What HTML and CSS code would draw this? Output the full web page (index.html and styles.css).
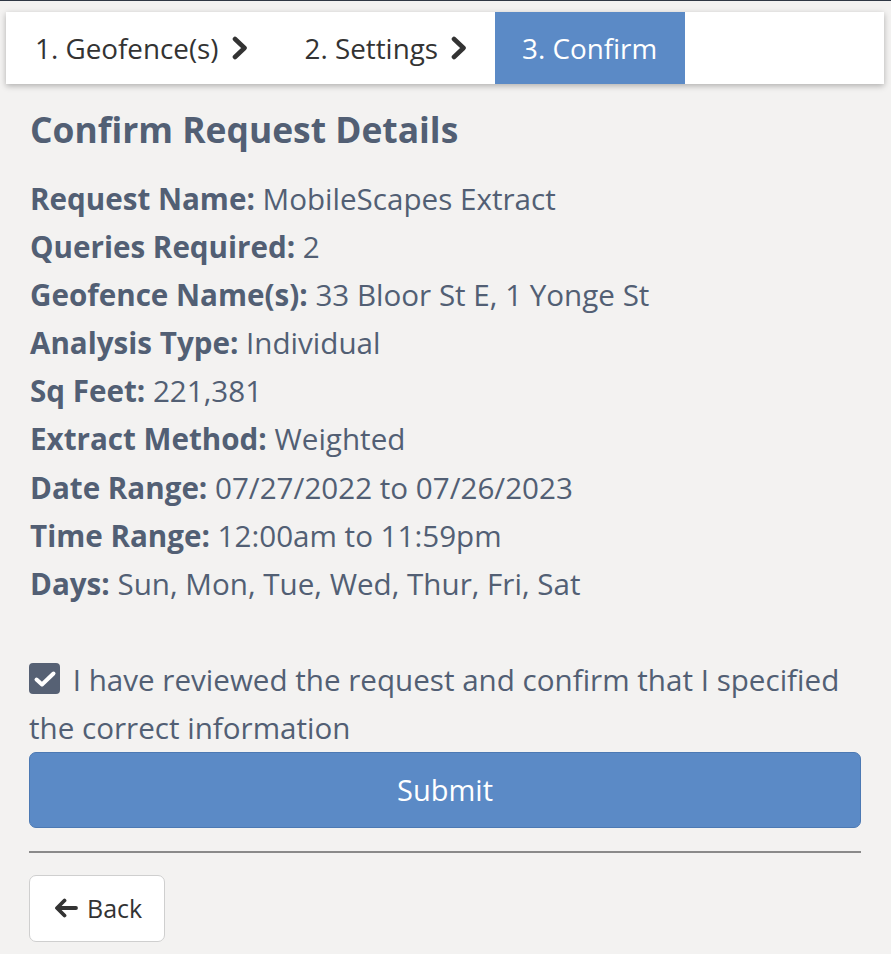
FILE: index.html
```html
<!DOCTYPE html>
<html lang="en">
<head>
<meta charset="utf-8">
<title>Confirm Request</title>
<link rel="stylesheet" href="styles.css">
</head>
<body>
<div class="page">
  <nav class="steps">
    <div class="step">1. Geofence(s)
      <svg class="chev" width="16" height="26" viewBox="0 0 16 26"><polyline points="3,4 12.5,13 3,22" fill="none" stroke="#333" stroke-width="4.6" stroke-linecap="round" stroke-linejoin="round"/></svg>
    </div>
    <div class="step">2. Settings
      <svg class="chev" width="16" height="26" viewBox="0 0 16 26"><polyline points="3,4 12.5,13 3,22" fill="none" stroke="#333" stroke-width="4.6" stroke-linecap="round" stroke-linejoin="round"/></svg>
    </div>
    <div class="step active">3. Confirm</div>
  </nav>

  <main class="content">
    <h1 class="title">Confirm Request Details</h1>
    <ul class="details">
      <li><b>Request Name:</b> MobileScapes Extract</li>
      <li><b>Queries Required:</b> 2</li>
      <li><b>Geofence Name(s):</b> 33 Bloor St E, 1 Yonge St</li>
      <li><b>Analysis Type:</b> Individual</li>
      <li><b>Sq Feet:</b> 221,381</li>
      <li><b>Extract Method:</b> Weighted</li>
      <li><b>Date Range:</b> 07/27/2022 to 07/26/2023</li>
      <li><b>Time Range:</b> 12:00am to 11:59pm</li>
      <li><b>Days:</b> Sun, Mon, Tue, Wed, Thur, Fri, Sat</li>
    </ul>

    <label class="confirm">
      <span class="box"><svg width="24" height="18" viewBox="0 0 24 18"><polyline points="3.5,9.5 9,14.5 20.5,3.5" fill="none" stroke="#fff" stroke-width="4" stroke-linecap="round" stroke-linejoin="round"/></svg></span>
      I have reviewed the request and confirm that I specified the correct information
    </label>

    <button class="submit" type="button">Submit</button>
    <hr class="rule">
    <button class="back" type="button">
      <svg width="25" height="20" viewBox="0 0 25 20"><path d="M23 10H4.5M11.5 2.5L4 10L11.5 17.5" fill="none" stroke="#333" stroke-width="3.8" stroke-linecap="round" stroke-linejoin="round"/></svg>
      Back
    </button>
  </main>
</div>
</body>
</html>
```

FILE: styles.css
```css
html, body {
  margin: 0;
  padding: 0;
}
body {
  background: #f3f2f1;
  border-top: 1px solid #2f3744;
  font-family: "Open Sans", "Liberation Sans", sans-serif;
  color: #525f74;
}
.page {
  padding: 11px 7px 0 6px;
}
.steps {
  display: flex;
  height: 72px;
  background: #fff;
  box-shadow: 0 2px 6px rgba(0, 0, 0, 0.28);
}
.step {
  display: flex;
  align-items: center;
  gap: 13px;
  padding: 0 28px 0 29px;
  font-size: 27.8px;
  color: #333;
}
.step.active {
  background: #5b8ac6;
  color: #fff;
  padding: 0 28px 0 27px;
}
.chev {
  display: block;
}
.content {
  padding: 0 23px;
}
.title {
  margin: 23px 0 0 1px;
  font-size: 35.4px;
  line-height: 44px;
  font-weight: 700;
  color: #525f74;
}
.details {
  list-style: none;
  margin: 24px 0 0 1px;
  padding: 0;
  font-size: 29.6px;
  line-height: 48.1px;
}
.details b {
  font-weight: 700;
}
.confirm {
  display: block;
  margin-top: 48px;
  font-size: 29.6px;
  line-height: 48px;
}
.box {
  display: inline-flex;
  align-items: center;
  justify-content: center;
  width: 31px;
  height: 31px;
  border-radius: 4px;
  background: #566174;
  vertical-align: 3px;
  margin-right: 5px;
}
.submit {
  display: block;
  width: 100%;
  height: 76px;
  margin-top: 0;
  border: 1px solid #4c79b3;
  border-radius: 7px;
  background: #5b8ac6;
  color: #fff;
  font-family: inherit;
  font-size: 29px;
}
.rule {
  margin: 23px 0 0 0;
  border: 0;
  border-top: 2px solid #8a8a8a;
}
.back {
  display: flex;
  align-items: center;
  gap: 9px;
  margin-top: 22px;
  height: 67px;
  padding: 0 22px 0 23px;
  background: #fff;
  border: 1px solid #cfcfcf;
  border-radius: 7px;
  font-family: inherit;
  font-size: 25px;
  color: #333;
}
```
